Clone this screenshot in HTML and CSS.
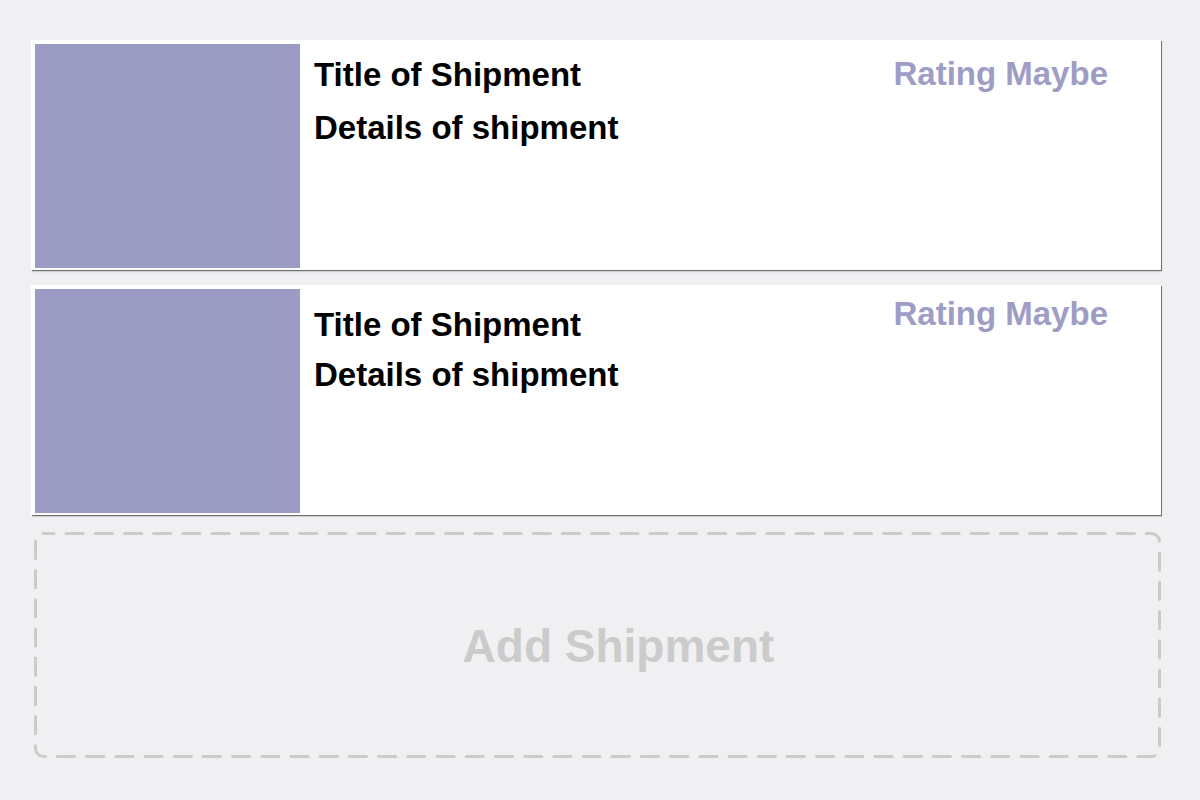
FILE: index.html
```html
<!DOCTYPE html>
<html lang="en">
<head>
<meta charset="utf-8">
<title>Shipments</title>
<link rel="stylesheet" href="styles.css">
</head>
<body>
<main class="list">
  <article class="card card--first">
    <div class="card-image"></div>
    <div class="card-body">
      <h2 class="card-title">Title of Shipment</h2>
      <p class="card-details">Details of shipment</p>
    </div>
    <div class="card-rating">Rating Maybe</div>
  </article>
  <article class="card card--second">
    <div class="card-image"></div>
    <div class="card-body">
      <h2 class="card-title">Title of Shipment</h2>
      <p class="card-details">Details of shipment</p>
    </div>
    <div class="card-rating">Rating Maybe</div>
  </article>
  <button class="add-shipment" type="button">
    <svg class="add-outline" width="1127" height="226" viewBox="0 0 1127 226" aria-hidden="true">
      <rect x="1.5" y="1.5" width="1124" height="223" rx="8" ry="8" fill="none" stroke="#cbcbcb" stroke-width="3" stroke-dasharray="17.2 12" stroke-dashoffset="6.7" stroke-linecap="round"/>
    </svg>
    <span class="add-label">Add Shipment</span>
  </button>
</main>
</body>
</html>
```

FILE: styles.css
```css
html, body {
  margin: 0;
  padding: 0;
  background: #f0f0f2;
}

body {
  font-family: "Liberation Sans", Arial, sans-serif;
  width: 1200px;
  height: 800px;
  overflow: hidden;
}

.list {
  display: flex;
  flex-direction: column;
  align-items: flex-start;
  padding: 40px 0 0 31px;
}

.card {
  display: flex;
  align-items: flex-start;
  box-sizing: border-box;
  width: 1130px;
  height: 230px;
  padding: 4px 0 2px 4px;
  background: #ffffff;
  box-shadow: 1px 1px 0 #6f6f6f, 1px 2px 1px rgba(0, 0, 0, 0.12);
}

.card--first {
  margin-bottom: 15px;
}

.card--second {
  margin-bottom: 17px;
}

.card-image {
  flex: none;
  width: 265px;
  height: 224px;
  background: #9c9bc4;
}

.card-body {
  flex: 1;
  display: flex;
  flex-direction: column;
  margin-left: 14px;
}

.card-title,
.card-details {
  margin: 0;
  font-size: 33px;
  line-height: 38px;
  font-weight: bold;
  color: #000;
}

.card--first .card-body {
  padding-top: 12px;
}

.card--first .card-details {
  margin-top: 15px;
}

.card--second .card-body {
  padding-top: 17px;
}

.card--second .card-details {
  margin-top: 12px;
}

.card-rating {
  flex: none;
  margin-right: 53px;
  font-size: 33px;
  line-height: 38px;
  font-weight: bold;
  color: #9d9dc5;
}

.card--first .card-rating {
  margin-top: 11px;
}

.card--second .card-rating {
  margin-top: 6px;
}

.add-shipment {
  position: relative;
  display: flex;
  align-items: center;
  justify-content: center;
  box-sizing: border-box;
  width: 1127px;
  height: 226px;
  margin: 0 0 0 3px;
  padding: 2px 0 0 42px;
  border: 0;
  background: transparent;
  font-family: inherit;
  cursor: pointer;
}

.add-outline {
  position: absolute;
  left: 0;
  top: 0;
}

.add-label {
  font-size: 46px;
  line-height: 46px;
  font-weight: bold;
  color: #cbcbcb;
}
```
